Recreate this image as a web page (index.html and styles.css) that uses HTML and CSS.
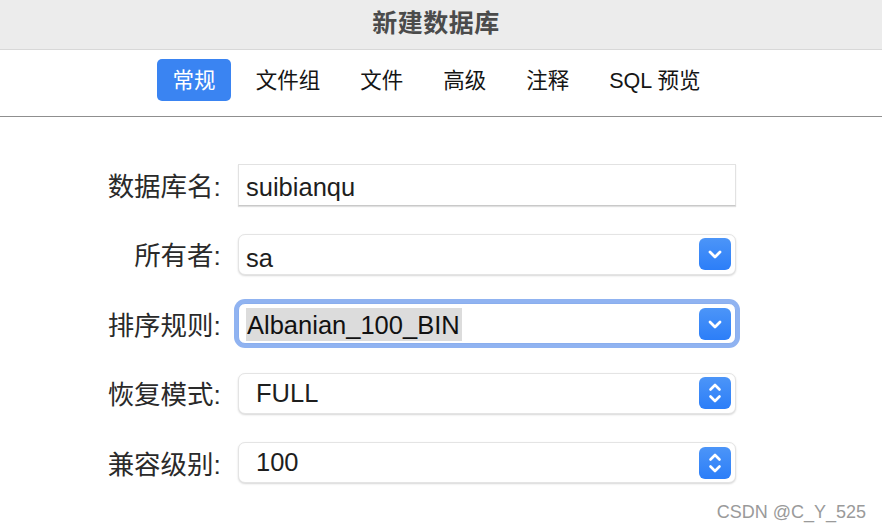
FILE: index.html
```html
<!DOCTYPE html>
<html lang="zh-CN">
<head>
<meta charset="utf-8">
<title>新建数据库</title>
<link rel="stylesheet" href="styles.css">
</head>
<body>
<div class="window">
  <header class="titlebar"><span class="title">新建数据库</span></header>
  <nav class="tabs">
    <span class="tab active">常规</span>
    <span class="tab">文件组</span>
    <span class="tab">文件</span>
    <span class="tab">高级</span>
    <span class="tab">注释</span>
    <span class="tab">SQL 预览</span>
  </nav>
  <main class="form">
    <label class="label">数据库名:</label>
    <div class="field textfield"><span class="value">suibianqu</span></div>

    <label class="label">所有者:</label>
    <div class="field popup"><span class="value">sa</span>
      <span class="btn"><svg viewBox="0 0 32 32" width="32" height="32"><path d="M11 14 L16 19 L21 14" fill="none" stroke="#fff" stroke-width="2.8" stroke-linecap="round" stroke-linejoin="round"/></svg></span>
    </div>

    <label class="label">排序规则:</label>
    <div class="field popup focused"><span class="value sel">Albanian_100_BIN</span>
      <span class="btn"><svg viewBox="0 0 32 32" width="32" height="32"><path d="M11 14 L16 19 L21 14" fill="none" stroke="#fff" stroke-width="2.8" stroke-linecap="round" stroke-linejoin="round"/></svg></span>
    </div>

    <label class="label">恢复模式:</label>
    <div class="field popup stepper"><span class="value">FULL</span>
      <span class="btn"><svg viewBox="0 0 32 32" width="32" height="32"><path d="M11.5 12.5 L16 8 L20.5 12.5 M11.5 19.5 L16 24 L20.5 19.5" fill="none" stroke="#fff" stroke-width="2.6" stroke-linecap="round" stroke-linejoin="round"/></svg></span>
    </div>

    <label class="label">兼容级别:</label>
    <div class="field popup stepper"><span class="value">100</span>
      <span class="btn"><svg viewBox="0 0 32 32" width="32" height="32"><path d="M11.5 12.5 L16 8 L20.5 12.5 M11.5 19.5 L16 24 L20.5 19.5" fill="none" stroke="#fff" stroke-width="2.6" stroke-linecap="round" stroke-linejoin="round"/></svg></span>
    </div>
  </main>
  <div class="watermark">CSDN @C_Y_525</div>
</div>
</body>
</html>
```
FILE: styles.css
```css
html, body {
  margin: 0;
  padding: 0;
  background: #ffffff;
}
body {
  font-family: "Liberation Sans", "Noto Sans CJK SC", sans-serif;
}
.window {
  position: relative;
  width: 882px;
  height: 528px;
  overflow: hidden;
  background: #ffffff;
}
.titlebar {
  height: 50px;
  box-sizing: border-box;
  background: #ececec;
  border-bottom: 1px solid #d8d8d8;
  display: flex;
  justify-content: center;
  align-items: center;
  padding-right: 10px;
}
.title {
  font-family: "Noto Sans CJK SC", sans-serif;
  font-weight: 700;
  font-size: 25px;
  color: #4b4b4b;
  letter-spacing: 0.5px;
  line-height: 1;
  margin-top: -6px;
}
.tabs {
  height: 67px;
  box-sizing: border-box;
  padding-top: 9px;
  padding-right: 9px;
  border-bottom: 1px solid #8f8f8f;
  display: flex;
  justify-content: center;
  align-items: flex-start;
  gap: 9px;
}
.tab {
  height: 42px;
  box-sizing: border-box;
  padding: 4px 15.5px 0;
  display: flex;
  align-items: center;
  font-size: 21.5px;
  color: #151515;
  border-radius: 5px;
  line-height: 1;
}
.tab.active {
  background: #3a84f2;
  color: #ffffff;
}
.form {
  display: grid;
  grid-template-columns: 221px 498px;
  column-gap: 17px;
  row-gap: 28.5px;
  grid-auto-rows: 41px;
  padding-top: 47px;
}
.label {
  justify-self: end;
  align-self: center;
  font-size: 26.5px;
  color: #2a2a2a;
  line-height: 1;
  margin-top: 5px;
}
.field {
  box-sizing: border-box;
  display: flex;
  align-items: center;
  background: #ffffff;
  font-size: 25.5px;
  color: #1e1e1e;
}
.textfield {
  height: 42px;
  border: 1px solid #e2e2e2;
  border-bottom-color: #c9c9c9;
  box-shadow: 0 1px 1px rgba(0,0,0,0.12);
  padding-left: 7px;
}
.textfield .value {
  margin-top: 4px;
}
.popup {
  border: 1px solid #e4e4e4;
  border-radius: 7px;
  box-shadow: 0 1px 2px rgba(0,0,0,0.16);
  padding-left: 7px;
  padding-right: 4px;
  justify-content: space-between;
}
.popup .value {
  margin-top: 9px;
}
.stepper {
  padding-left: 17px;
}
.stepper .value {
  margin-top: 0;
}
.focused {
  box-shadow: 0 0 0 4px #90b3f1;
  border-color: #8aaeee;
}
.focused .value {
  margin-top: 2px;
}
.sel {
  background: #dcdcdc;
  color: #111111;
  padding: 2px 2px 1px 1px;
  line-height: 30px;
}
.btn {
  width: 32px;
  height: 32px;
  border-radius: 6px;
  background: linear-gradient(#4c95f8, #2c7ef8);
  display: flex;
  align-items: center;
  justify-content: center;
}
.btn svg {
  display: block;
}
.watermark {
  position: absolute;
  right: 16px;
  bottom: 7px;
  font-size: 18px;
  color: #9a9a9a;
  text-shadow: 0 0 2px #ffffff;
  line-height: 1;
}
```
